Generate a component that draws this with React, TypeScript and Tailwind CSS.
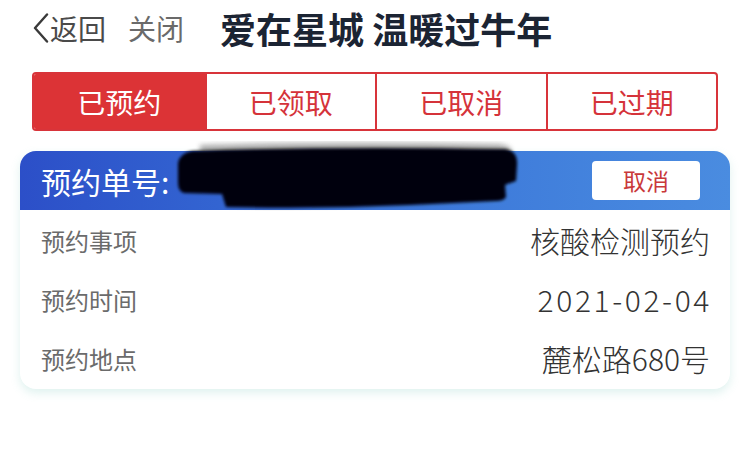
const tabs = ['已预约', '已领取', '已取消', '已过期'];

const rows = [
  { label: '预约事项', value: '核酸检测预约', spaced: false },
  { label: '预约时间', value: '2021-02-04', spaced: true },
  { label: '预约地点', value: '麓松路680号', spaced: false },
];

export default function App() {
  return (
    <div
      className="relative w-[750px] h-[449px] bg-white overflow-hidden"
      style={{ fontFamily: '"Noto Sans CJK SC", "Noto Sans", sans-serif' }}
    >
      {/* Top bar */}
      <div className="h-[69px] flex items-center pb-[14px]">
        <div className="flex items-center pl-[33px] text-[28px] leading-none">
          <svg width="16" height="30" viewBox="0 0 16 30" className="mr-[1px]">
            <polyline
              points="14,1.5 2,15 14,28.5"
              fill="none"
              stroke="#3a3a3a"
              strokeWidth="2.4"
              strokeLinecap="round"
              strokeLinejoin="round"
            />
          </svg>
          <span className="text-[#4a4a4a]">返回</span>
          <span className="ml-[22px] text-[#6a6a6a]">关闭</span>
        </div>
        <h1 className="ml-[36px] text-[36px] font-bold text-[#1b2433] leading-none">
          爱在星城 温暖过牛年
        </h1>
      </div>

      {/* Tabs */}
      <div className="mx-[32px] mt-[3px] h-[59px] grid grid-cols-4 border-2 border-[#d8343a] rounded-[4px] overflow-hidden">
        {tabs.map((t, i) => (
          <div
            key={t}
            className={
              i === 0
                ? 'flex items-center justify-center bg-[#dc3336] text-white text-[28px]'
                : 'flex items-center justify-center border-l-2 border-[#d8343a] text-[#d5333a] text-[28px]'
            }
          >
            {t}
          </div>
        ))}
      </div>

      {/* Order card */}
      <div className="mx-[20px] mt-[20px] rounded-[16px] bg-white shadow-[0_4px_10px_rgba(110,195,180,0.22)] overflow-hidden">
        <div className="h-[59px] flex items-center justify-between pl-[21px] pr-[30px] bg-gradient-to-r from-[#2c4fc8] via-[#3a74d8] to-[#4a8ce0]">
          <span className="text-white text-[30px] leading-none">预约单号:</span>
          <button className="w-[108px] h-[39px] bg-white rounded-[4px] text-[#c9383a] text-[23px]">
            取消
          </button>
        </div>
        <div className="pl-[21px] pr-[20px] pt-[1px] pb-[1px]">
          {rows.map((r) => (
            <div key={r.label} className="h-[59px] flex items-center justify-between">
              <span className="text-[24px] text-[#6b6b6b]">{r.label}</span>
              <span
                className={
                  r.spaced
                    ? 'text-[30px] text-[#333] font-light tracking-[2.6px] -mr-[2px]'
                    : 'text-[30px] text-[#333] font-light'
                }
              >
                {r.value}
              </span>
            </div>
          ))}
        </div>
      </div>

      {/* redaction scribble over the order number */}
      <svg
        className="absolute left-[170px] top-[135px]"
        width="360"
        height="80"
        viewBox="0 0 360 80"
      >
        <defs>
          <filter id="soft">
            <feGaussianBlur stdDeviation="1.6" />
          </filter>
          <filter id="haze">
            <feGaussianBlur stdDeviation="2.5" />
          </filter>
        </defs>
        <path
          d="M30 10 Q150 6 330 9 Q345 12 340 18 L30 18 Z"
          fill="#6a6a6a"
          opacity="0.55"
          filter="url(#haze)"
        />
        <path
          d="M22 16 Q160 11 335 14 Q348 16 347 30 L346 46 Q340 48 335 50 L336 62 Q334 66 326 66 L240 70 Q150 74 56 72 L52 59 L14 58 Q8 56 8 48 L8 28 Q10 18 22 16 Z"
          fill="#03060f"
          filter="url(#soft)"
        />
      </svg>
    </div>
  );
}
